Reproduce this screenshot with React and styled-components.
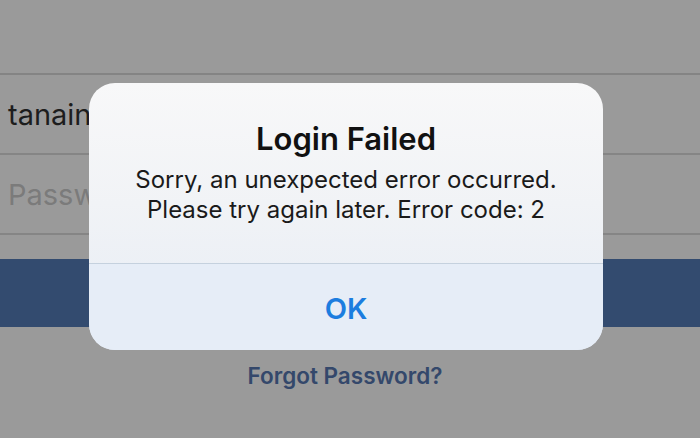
import styled, { createGlobalStyle } from "styled-components";

const GlobalStyle = createGlobalStyle`
  html, body {
    margin: 0;
    padding: 0;
    background: #9a9a9a;
  }
  body {
    font-family: Inter, "Noto Sans", "Liberation Sans", sans-serif;
  }
`;

const Page = styled.div`
  position: relative;
  width: 700px;
  height: 438px;
  overflow: hidden;
  background: #9a9a9a;
`;

const Header = styled.div`
  height: 73px;
  border-bottom: 2px solid #848484;
`;

const Field = styled.div`
  height: 78px;
  display: flex;
  align-items: center;
  padding-left: 8px;
  border-bottom: 2px solid #858585;
  font-size: 29px;
  color: ${(p) => (p.$placeholder ? "#7b7b7b" : "#1d1d1d")};
`;

const LoginButton = styled.div`
  margin-top: 24px;
  height: 68px;
  background: #334b6f;
`;

const Forgot = styled.div`
  margin-top: 35px;
  text-align: center;
  font-size: 22.5px;
  font-weight: 600;
  color: #34486b;
  padding-right: 10px;
`;

const Alert = styled.div`
  position: absolute;
  left: 89px;
  top: 83px;
  width: 514px;
  height: 267px;
  border-radius: 26px;
  overflow: hidden;
  display: flex;
  flex-direction: column;
  background: linear-gradient(180deg, #f8f8f9 0%, #f1f3f6 45%, #e6ecf5 100%);
`;

const AlertBody = styled.div`
  height: 181px;
  display: flex;
  flex-direction: column;
  align-items: center;
  padding-top: 38px;
  box-sizing: border-box;
  border-bottom: 1.5px solid #c5d1de;
`;

const Title = styled.div`
  font-size: 31px;
  font-weight: 600;
  color: #111;
  line-height: 36px;
`;

const Message = styled.div`
  margin-top: 8px;
  font-size: 24px;
  line-height: 30px;
  color: #1a1a1a;
  text-align: center;
`;

const AlertAction = styled.div`
  flex: 1;
  display: flex;
  align-items: center;
  justify-content: center;
  padding-top: 2px;
  font-size: 29px;
  font-weight: 600;
  color: #1c7ddf;
  background: #e6edf7;
`;

export default function App() {
  return (
    <Page>
      <GlobalStyle />
      <Header />
      <Field>tanaina</Field>
      <Field $placeholder>Password</Field>
      <LoginButton />
      <Forgot>Forgot Password?</Forgot>
      <Alert>
        <AlertBody>
          <Title>Login Failed</Title>
          <Message>
            Sorry, an unexpected error occurred.
            <br />
            Please try again later. Error code: 2
          </Message>
        </AlertBody>
        <AlertAction>OK</AlertAction>
      </Alert>
    </Page>
  );
}
